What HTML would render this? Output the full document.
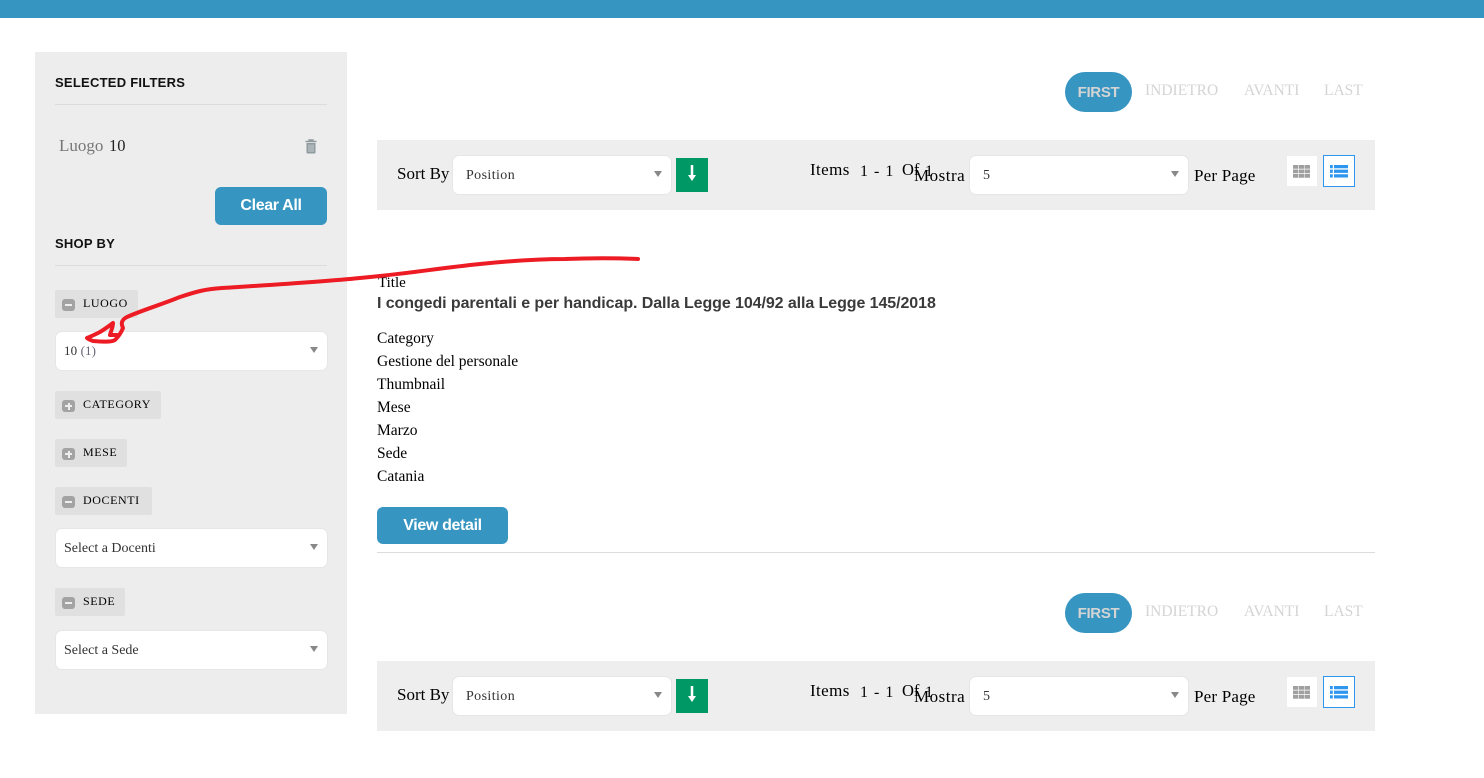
<!DOCTYPE html>
<html><head><meta charset="utf-8"><style>
html,body{margin:0;padding:0;width:1484px;height:778px;overflow:hidden;background:#fff}
body{position:relative;font-family:"Liberation Serif",serif;color:#000}
.a,.t{position:absolute}
.t{white-space:nowrap;line-height:20px;font-size:15.5px}
.s{font-family:"Liberation Sans",sans-serif}
.m{font-size:17px}
.sel{position:absolute;box-sizing:border-box;background:#fff;border:1px solid #e6e6e6;border-radius:7px;height:40px}
.sel:after{content:"";position:absolute;right:9px;top:15px;border:4px solid transparent;border-top:6px solid #888;border-bottom:0}
.sel span{position:absolute;white-space:nowrap;font-size:14px;line-height:16px;top:12px;color:#333}
.btn{position:absolute;box-sizing:border-box;background:#3695c1;border-radius:6px;color:#fff;font:bold 16px/38px "Liberation Sans",sans-serif;text-align:center;letter-spacing:-.35px}
.hd{position:absolute;left:55px;height:28px;background:#e0e0e0;border-radius:2px}
.hd i{position:absolute;left:7px;top:9px;width:13px;height:12px;background:#a3a3a3;border-radius:3px}
.hd i:before{content:"";position:absolute;left:3px;top:5px;width:7px;height:2px;background:#eee}
.hd i.p:after{content:"";position:absolute;left:5.5px;top:2.5px;width:2px;height:7px;background:#eee}
.hd span{position:absolute;left:28px;top:5px;font-size:12px;line-height:16px;letter-spacing:.58px;white-space:nowrap}
.line{position:absolute;height:1px;background:#dcdcdc}
.pg{position:absolute;white-space:nowrap;font-size:15.5px;line-height:20px;color:#d4d4d4}
.first{position:absolute;width:67px;height:40px;border-radius:20px;background:#3695c1;color:#d4d4d4;font:bold 15px/41px "Liberation Sans",sans-serif;text-align:center;letter-spacing:-.3px}
.hh{font-size:13px;font-weight:bold;letter-spacing:.25px;color:#111}
</style></head><body>
<div class="a" style="left:0;top:0;width:1484px;height:18px;background:#3695c1"></div>

<div class="a" style="left:35px;top:52px;width:312px;height:662px;background:#ededed"></div>
<div class="t s hh" style="left:55px;top:73px">SELECTED FILTERS</div>
<div class="line" style="left:55px;top:104px;width:272px"></div>
<div class="t" style="left:59px;top:136px;font-size:17px;color:#777">Luogo</div>
<div class="t" style="left:109px;top:136px;font-size:16.5px;color:#222">10</div>
<svg class="a" style="left:304px;top:139px" width="14" height="15" viewBox="0 0 14 15"><path d="M1.500 2.500H12.500M5 2.500V1H9V2.500" fill="none" stroke="#8f9b9f" stroke-width="1.400"/><path d="M2.500 4H11.500V13.500Q11.500 14.500 10.500 14.500H3.500Q2.500 14.500 2.500 13.500Z" fill="#8f9b9f"/><path d="M5 5.500V13M7 5.500V13M9 5.500V13" stroke="#d5dadc" stroke-width=".8"/></svg>
<div class="btn" style="left:215px;top:187px;width:112px;height:38px">Clear All</div>
<div class="t s hh" style="left:55px;top:234px">SHOP BY</div>
<div class="line" style="left:55px;top:265px;width:272px"></div>

<div class="hd" style="top:290px;width:83px"><i></i><span>LUOGO</span></div>
<div class="sel" style="left:55px;top:331px;width:273px"><span style="left:8px;top:11px;font-size:13px;letter-spacing:.1px">10 <span style="position:static;font-size:13px;color:#667">(1)</span></span></div>
<div class="hd" style="top:391px;width:106px"><i class="p"></i><span>CATEGORY</span></div>
<div class="hd" style="top:439px;width:72px"><i class="p"></i><span>MESE</span></div>
<div class="hd" style="top:487px;width:97px"><i></i><span>DOCENTI</span></div>
<div class="sel" style="left:55px;top:528px;width:273px"><span style="left:8px">Select a Docenti</span></div>
<div class="hd" style="top:588px;width:70px"><i></i><span>SEDE</span></div>
<div class="sel" style="left:55px;top:630px;width:273px"><span style="left:8px">Select a Sede</span></div>

<div class="first" style="left:1065px;top:72px">FIRST</div>
<div class="pg" style="left:1145px;top:81px">INDIETRO</div>
<div class="pg" style="left:1244px;top:81px">AVANTI</div>
<div class="pg" style="left:1324px;top:81px">LAST</div>

<div class="a" style="left:377px;top:140px;width:998px;height:70px;background:#eee"></div>
<div class="t m" style="left:397px;top:164px">Sort By</div>
<div class="sel" style="left:452px;top:155px;width:220px"><span style="left:13px;letter-spacing:.4px">Position</span></div>
<div class="a" style="left:676px;top:158px;width:32px;height:34px;background:#009966"></div>
<svg class="a" style="left:676px;top:158px" width="32" height="34"><path d="M16 7V18" stroke="#fff" stroke-width="2.500"/><path d="M12 17H20L16 23Z" fill="#fff"/></svg>
<div class="t m" style="left:810px;top:160px;letter-spacing:.4px">Items</div>
<div class="t" style="left:860px;top:162px;font-size:16px;letter-spacing:1px">1 - 1</div>
<div class="t" style="left:902px;top:160px;font-size:16.5px">Of</div>
<div class="t" style="left:925px;top:162px;font-size:16px">1</div>
<div class="t m" style="left:914px;top:166px;letter-spacing:.5px">Mostra</div>
<div class="sel" style="left:969px;top:155px;width:220px"><span style="left:13px">5</span></div>
<div class="t m" style="left:1194px;top:166px;letter-spacing:.2px">Per Page</div>
<div class="a" style="left:1287px;top:156px;width:30px;height:30px;background:#fff"></div>
<svg class="a" style="left:1293px;top:165px" width="17" height="13"><path d="M0 0h5.300v3.800H0zM5.900 0h5.300v3.800H5.900zM11.700 0h5.300v3.800h-5.300zM0 4.500h5.300v3.800H0zM5.900 4.500h5.300v3.800H5.900zM11.700 4.500h5.300v3.800h-5.300zM0 9h5.300v3.800H0zM5.900 9h5.300v3.800H5.900zM11.700 9h5.300v3.800h-5.300z" fill="#a0a0a0"/></svg>
<div class="a" style="left:1323px;top:155px;width:32px;height:32px;box-sizing:border-box;border:1px solid #2f96f0;background:#fff"></div>
<svg class="a" style="left:1330px;top:165px" width="18" height="13"><path d="M0 0h2.800v3.300H0zM4 0h14v3.300H4zM0 4.600h2.800v3.300H0zM4 4.600h14v3.300H4zM0 9.200h2.800v3.300H0zM4 9.200h14v3.300H4z" fill="#2f96f0"/></svg>

<div class="t" style="left:378px;top:273px;font-size:15px">Title</div>
<div class="t s" style="left:377px;top:294px;font-size:16px;font-weight:bold;color:#3a3a3a;letter-spacing:-.08px">I congedi parentali e per handicap. Dalla Legge 104/92 alla Legge 145/2018</div>
<div class="t" style="left:377px;top:329px">Category</div>
<div class="t" style="left:377px;top:352px">Gestione del personale</div>
<div class="t" style="left:377px;top:375px">Thumbnail</div>
<div class="t" style="left:377px;top:398px">Mese</div>
<div class="t" style="left:377px;top:421px">Marzo</div>
<div class="t" style="left:377px;top:444px">Sede</div>
<div class="t" style="left:377px;top:467px">Catania</div>
<div class="btn" style="left:377px;top:507px;width:131px;height:37px">View detail</div>
<div class="line" style="left:377px;top:552px;width:998px"></div>

<div class="first" style="left:1065px;top:593px">FIRST</div>
<div class="pg" style="left:1145px;top:602px">INDIETRO</div>
<div class="pg" style="left:1244px;top:602px">AVANTI</div>
<div class="pg" style="left:1324px;top:602px">LAST</div>

<div class="a" style="left:377px;top:661px;width:998px;height:70px;background:#eee"></div>
<div class="t m" style="left:397px;top:685px">Sort By</div>
<div class="sel" style="left:452px;top:676px;width:220px"><span style="left:13px;letter-spacing:.4px">Position</span></div>
<div class="a" style="left:676px;top:679px;width:32px;height:34px;background:#009966"></div>
<svg class="a" style="left:676px;top:679px" width="32" height="34"><path d="M16 7V18" stroke="#fff" stroke-width="2.500"/><path d="M12 17H20L16 23Z" fill="#fff"/></svg>
<div class="t m" style="left:810px;top:681px;letter-spacing:.4px">Items</div>
<div class="t" style="left:860px;top:683px;font-size:16px;letter-spacing:1px">1 - 1</div>
<div class="t" style="left:902px;top:681px;font-size:16.5px">Of</div>
<div class="t" style="left:925px;top:683px;font-size:16px">1</div>
<div class="t m" style="left:914px;top:687px;letter-spacing:.5px">Mostra</div>
<div class="sel" style="left:969px;top:676px;width:220px"><span style="left:13px">5</span></div>
<div class="t m" style="left:1194px;top:687px;letter-spacing:.2px">Per Page</div>
<div class="a" style="left:1287px;top:677px;width:30px;height:30px;background:#fff"></div>
<svg class="a" style="left:1293px;top:686px" width="17" height="13"><path d="M0 0h5.300v3.800H0zM5.900 0h5.300v3.800H5.900zM11.700 0h5.300v3.800h-5.300zM0 4.500h5.300v3.800H0zM5.900 4.500h5.300v3.800H5.900zM11.700 4.500h5.300v3.800h-5.300zM0 9h5.300v3.800H0zM5.900 9h5.300v3.800H5.900zM11.700 9h5.300v3.800h-5.300z" fill="#a0a0a0"/></svg>
<div class="a" style="left:1323px;top:676px;width:32px;height:32px;box-sizing:border-box;border:1px solid #2f96f0;background:#fff"></div>
<svg class="a" style="left:1330px;top:686px" width="18" height="13"><path d="M0 0h2.800v3.300H0zM4 0h14v3.300H4zM0 4.600h2.800v3.300H0zM4 4.600h14v3.300H4zM0 9.200h2.800v3.300H0zM4 9.200h14v3.300H4z" fill="#2f96f0"/></svg>

<svg class="a" style="left:0;top:0" width="1484" height="778"><path d="M638 259C615 258 590 258 565 259C535 259 510 261 480 264C440 268 405 274 360 278C320 282 270 285 222 288C205 289 195 292 180 297C160 305 140 311 127 317C121 320 121 324 123 328C121 333 118 337 115 340C112 342 105 342 93 341C90 340 88 339 87 338C92 336 96 334 100 332C105 329 109 326 113 323C113 327 111 331 110 335L117 335" fill="none" stroke="#ed1c24" stroke-width="4" stroke-linecap="round" stroke-linejoin="round"/></svg>
</body></html>
